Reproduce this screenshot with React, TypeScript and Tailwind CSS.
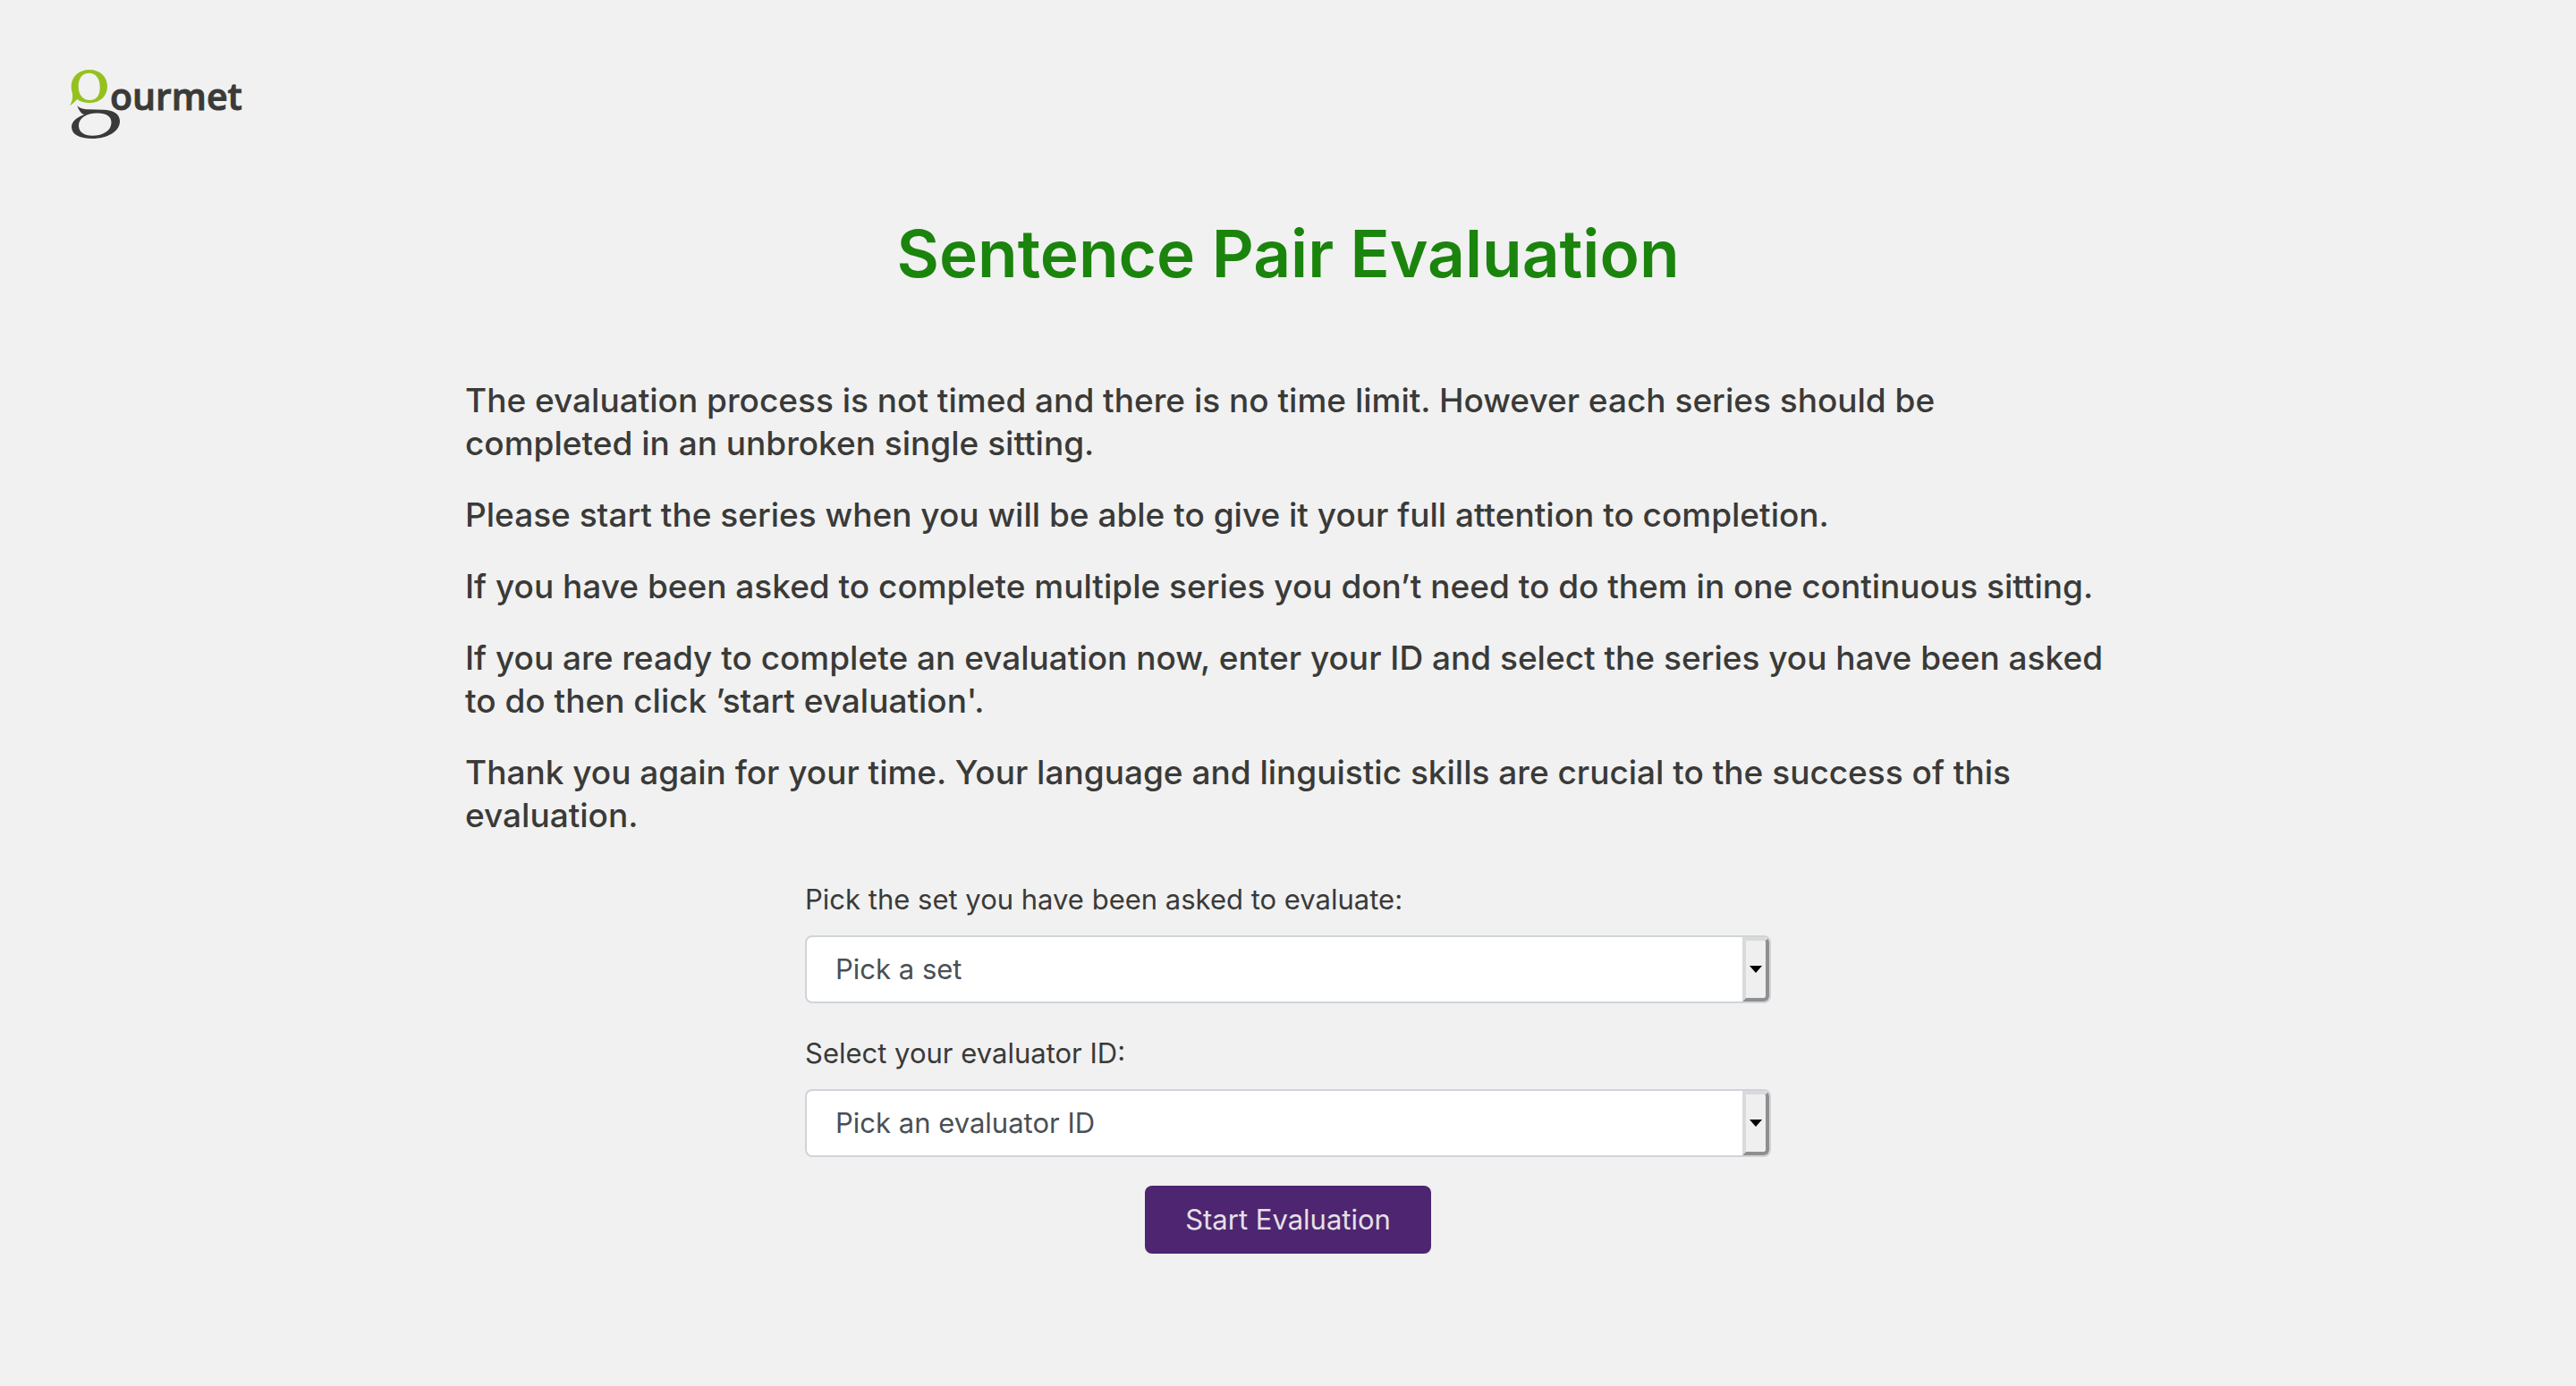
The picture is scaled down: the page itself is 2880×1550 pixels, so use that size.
import React from "react";

function Logo() {
  return (
    <svg viewBox="0 0 230 110" className="block h-[110px] w-[230px]" role="img" aria-label="gourmet">
      <path
        fill="#95c11f"
        fillRule="evenodd"
        d="M40 18C52 18 60 26 60 36.500C60 47.500 52 55 40 55C34 55 29.500 53.500 26.500 51C23.500 53.500 21 57 18 58C20.500 54 21.500 49.500 21 44.500C20 42 19.700 39.500 19.700 36.500C19.700 26 28 18 40 18ZM39.500 21.700C32 21.700 27.700 27.500 27.700 36.500C27.700 46 32.500 52 40.500 52C48 52 51.700 46.500 51.700 38C51.700 28 47.500 21.700 39.500 21.700Z"
      />
      <path
        fill="#3a3a38"
        fillRule="evenodd"
        d="M26.300 58C28.500 60.500 32 62 38 62.300L55 62.700C67 63 74 67.500 74 75.500C74 86.500 61 95 43 95C28.500 95 20 90 20 82C20 76.500 25 71.500 34 68.300C30 66.500 28 63 26.300 58ZM49 66.500C36 66.500 28 72.500 28 80.500C28 87.500 34 91.800 43 91.800C56 91.800 64.500 85.500 64.500 77C64.500 70.500 59 66.500 49 66.500Z"
      />
      <text
        x="63"
        y="63"
        fill="#3a3a38"
        stroke="#3a3a38"
        strokeWidth="1"
        fontFamily="'Open Sans', 'Noto Sans', sans-serif"
        fontSize="41"
        fontWeight="600"
      >
        ourmet
      </text>
    </svg>
  );
}

const paragraphs = [
  "The evaluation process is not timed and there is no time limit. However each series should be completed in an unbroken single sitting.",
  "Please start the series when you will be able to give it your full attention to completion.",
  "If you have been asked to complete multiple series you don’t need to do them in one continuous sitting.",
  "If you are ready to complete an evaluation now, enter your ID and select the series you have been asked to do then click ’start evaluation'.",
  "Thank you again for your time. Your language and linguistic skills are crucial to the success of this evaluation.",
];

function SelectField({ id, label, placeholder }: { id: string; label: string; placeholder: string }) {
  return (
    <div className="mb-8">
      <label htmlFor={id} className="mb-4 block">
        {label}
      </label>
      <div className="relative">
        <select
          id={id}
          className="block h-[76px] w-full appearance-none rounded-lg border-2 border-[#ced4da] bg-white pl-8 pr-12 text-[#495057]"
        >
          <option>{placeholder}</option>
        </select>
        <span
          aria-hidden="true"
          className="pointer-events-none absolute inset-y-0.5 right-0.5 flex w-[30px] items-center justify-center rounded-r-md border-4 border-t-[#dadada] border-r-[#8f8f8f] border-b-[#8f8f8f] border-l-[#dadada] bg-[#efefef]"
        >
          <svg viewBox="0 0 14 8" className="h-2 w-3.5">
            <path d="M0 0H14L7 8Z" fill="#000" />
          </svg>
        </span>
      </div>
    </div>
  );
}

export default function App() {
  return (
    <div className="min-h-screen bg-[#f1f1f1] font-['Inter',sans-serif] text-[31px] leading-[48px] text-[#3a3a38]">
      <header className="px-[60px] pt-[60px]">
        <Logo />
      </header>
      <main className="mx-auto max-w-[1840px] pt-[66px] pb-16">
        <h1 className="mb-[92px] text-center text-[73px] leading-[96px] font-semibold text-[#1b840d]">
          Sentence Pair Evaluation
        </h1>
        <div className="mb-[46px] flex flex-col gap-8 text-[37px] font-medium">
          {paragraphs.map((text) => (
            <p key={text}>{text}</p>
          ))}
        </div>
        <form className="mx-auto max-w-[1080px]" onSubmit={(e) => e.preventDefault()}>
          <SelectField id="set" label="Pick the set you have been asked to evaluate:" placeholder="Pick a set" />
          <SelectField id="evaluator" label="Select your evaluator ID:" placeholder="Pick an evaluator ID" />
          <button
            type="submit"
            className="mx-auto block h-[76px] w-80 rounded-lg bg-[#4e2570] text-[#e4e0e6]"
          >
            Start Evaluation
          </button>
        </form>
      </main>
    </div>
  );
}
